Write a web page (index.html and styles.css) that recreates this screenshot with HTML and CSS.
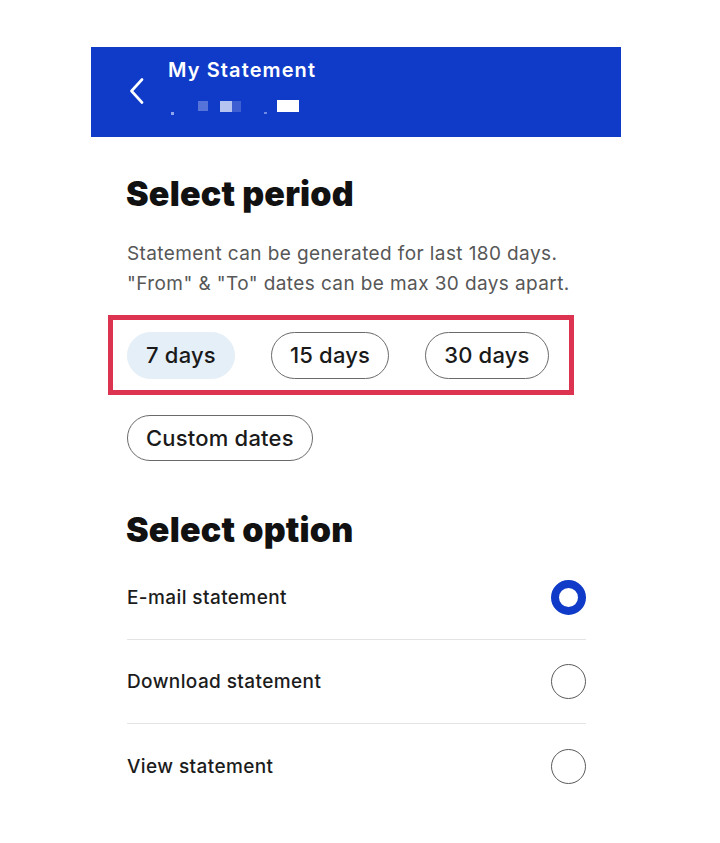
FILE: index.html
```html
<!DOCTYPE html>
<html lang="en">
<head>
<meta charset="utf-8">
<title>My Statement</title>
<link rel="stylesheet" href="styles.css">
</head>
<body>
<div class="screen">
  <header class="appbar">
    <button class="back" aria-label="Back">
      <svg width="16" height="26" viewBox="0 0 16 26"><path d="M13 1.5 L2.5 13 L13 24.5" fill="none" stroke="#fff" stroke-width="2.6" stroke-linecap="round" stroke-linejoin="round"/></svg>
    </button>
    <div class="appbar-text">
      <div class="appbar-title">My Statement</div>
      <div class="masked" aria-hidden="true">
        <span class="px px-dot"></span>
        <span class="px px-a"></span>
        <span class="px px-b"></span>
        <span class="px px-c"></span>
        <span class="px px-dot2"></span>
        <span class="px px-w"></span>
      </div>
    </div>
  </header>

  <main class="content">
    <h1 class="heading">Select period</h1>
    <p class="note">Statement can be generated for last 180 days.<br>"From" &amp; "To" dates can be max 30 days apart.</p>

    <div class="highlight">
      <button class="chip chip-active">7 days</button>
      <button class="chip">15 days</button>
      <button class="chip">30 days</button>
    </div>
    <div class="chips-row">
      <button class="chip">Custom dates</button>
    </div>

    <h2 class="heading heading-2">Select option</h2>
    <ul class="options">
      <li class="option"><span>E-mail statement</span><span class="radio radio-on"></span></li>
      <li class="option"><span>Download statement</span><span class="radio"></span></li>
      <li class="option"><span>View statement</span><span class="radio"></span></li>
    </ul>
  </main>
</div>
</body>
</html>
```

FILE: styles.css
```css
* { box-sizing: border-box; }
html, body { margin: 0; padding: 0; background: #fff; }
body { font-family: "Inter", "Liberation Sans", Arial, sans-serif; color: #1a1a1a; }

.screen { width: 530px; margin: 47px 0 0 91px; }

.appbar {
  height: 90px;
  background: #0f3bc8;
  display: flex;
  align-items: flex-start;
  padding: 0 0 0 38px;
}
.back {
  border: 0; background: none; padding: 0;
  width: 16px; height: 26px;
  margin-top: 31px;
  display: block;
}
.back svg { display: block; }
.appbar-text { margin-left: 23px; padding-top: 11px; }
.appbar-title {
  color: #fff;
  font-size: 20px;
  font-weight: 600;
  letter-spacing: 1.1px;
  line-height: 24px;
}
.masked { position: relative; height: 22px; margin-top: 18px; width: 140px; }
.px { position: absolute; display: block; }
.px-dot { left: 3px; top: 12px; width: 3px; height: 3px; background: #8fa4ea; }
.px-a { left: 30px; top: 1px; width: 10px; height: 10px; background: #5573d9; }
.px-b { left: 52px; top: 1px; width: 12px; height: 11px; background: #b4c3f0; }
.px-c { left: 64px; top: 1px; width: 9px; height: 11px; background: #3e5fd2; }
.px-dot2 { left: 96px; top: 12px; width: 3px; height: 2px; background: #6f88e2; }
.px-w { left: 109px; top: 0; width: 22px; height: 12px; background: #fff; }

.content { padding: 0 35px 0 36px; }

.heading {
  font-weight: 900;
  font-size: 34px;
  letter-spacing: 0.2px;
  line-height: 40px;
  margin: 37px 0 0 -1px;
  color: #111;
}
.note {
  margin: 25px 0 0;
  font-size: 19px;
  line-height: 30px;
  color: #575757;
  letter-spacing: 0.4px;
}

.highlight {
  margin: 16px 0 0 -19px;
  width: 466px;
  height: 80px;
  border: 5px solid #dc3350;
  display: flex;
  align-items: center;
  gap: 36px;
  padding: 0 0 0 14px;
}
.chip {
  font-family: "Inter", "Liberation Sans", sans-serif;
  font-size: 22px;
  font-weight: 500;
  letter-spacing: 0.2px;
  color: #1a1a1a;
  background: #fff;
  border: 1px solid #6a6a6a;
  border-radius: 24px;
  height: 47px;
  padding: 0 18px;
  display: inline-flex;
  align-items: center;
  line-height: 1;
}
.chip-active { background: #e5eff8; border-color: #e5eff8; }
.chips-row { margin-top: 20px; display: flex; }
.chips-row .chip { height: 46px; }

.heading-2 { margin-top: 49px; }

.options { list-style: none; margin: 6px 0 0; padding: 0; width: 459px; }
.option {
  height: 84px;
  display: flex;
  align-items: center;
  justify-content: space-between;
  font-size: 19px;
  font-weight: 500;
  letter-spacing: 0.4px;
  color: #1c1c1c;
  border-bottom: 1.5px solid #e4e4e4;
}
.option:last-child { border-bottom: 0; }
.radio {
  width: 35px; height: 35px;
  border-radius: 50%;
  border: 1.5px solid #5a5a5a;
  flex: none;
}
.radio-on { border: 8.5px solid #0f3bc8; }
```
